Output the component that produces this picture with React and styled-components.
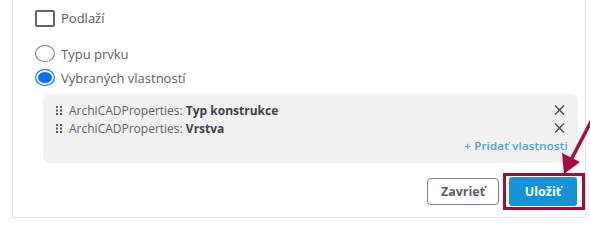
import React from "react";
import styled, { createGlobalStyle } from "styled-components";

const Global = createGlobalStyle`
  html, body { margin: 0; padding: 0; background: #fff; }
  body { font-family: "Open Sans", "Noto Sans", sans-serif; color: #555a62; }
  * { box-sizing: border-box; }
`;

const Page = styled.div`
  position: relative;
  width: 590px;
  height: 245px;
  overflow: hidden;
`;

const Panel = styled.div`
  margin-left: 12px;
  width: 574px;
  border: 1px solid #dfe2ea;
  border-top: none;
  padding: 10px 0 7px 22px;
  display: flex;
  flex-direction: column;
`;

const CheckRow = styled.label`
  display: flex;
  align-items: center;
  gap: 6px;
  height: 16px;
  font-size: 13px;
  color: #5d6068;
`;

const Box = styled.span`
  flex: none;
  width: 20px;
  height: 17px;
  border: 2px solid #5f6473;
  border-radius: 2px;
  background: #fff;
`;

const RadioGroup = styled.div`
  display: flex;
  flex-direction: column;
  gap: 7px;
  margin-top: 19px;
`;

const RadioRow = styled.label`
  display: flex;
  align-items: center;
  gap: 6px;
  height: 17px;
  font-size: 13px;
  color: #5d6068;
`;

const RadioDot = styled.span`
  flex: none;
  width: 20px;
  height: 17px;
  border-radius: 50%;
  border: 1.5px solid ${(p) => (p.$on ? "#1a7cf5" : "#7a7d85")};
  background: ${(p) => (p.$on ? "#0a6ff5" : "#fff")};
  box-shadow: ${(p) => (p.$on ? "inset 0 0 0 2px #fff" : "none")};
`;

const PropsBox = styled.div`
  margin: 8px 7px 0 8px;
  background: #f1f1f1;
  border-radius: 6px;
  padding: 7px 10px 8px 13px;
  display: flex;
  flex-direction: column;
`;

const PropRow = styled.div`
  display: flex;
  align-items: center;
  height: 18px;
  font-size: 12px;
  color: #61646b;
`;

const Handle = styled.svg`
  width: 7px;
  height: 9px;
  margin-right: 6px;
  flex: none;
`;

const PropName = styled.span`
  flex: 1;
  white-space: nowrap;
  b { color: #3f424a; font-weight: 700; }
`;

const RemoveBtn = styled.svg`
  width: 11px;
  height: 10px;
  margin-right: 3px;
`;

const AddLink = styled.a`
  align-self: flex-end;
  height: 18px;
  line-height: 18px;
  font-size: 11.5px;
  font-weight: 600;
  color: #4aa6da;
  letter-spacing: 0.2px;
  text-decoration: none;
`;

const Footer = styled.div`
  display: flex;
  justify-content: flex-end;
  align-items: center;
  gap: 4px;
  margin-top: 10px;
`;

const GhostButton = styled.button`
  width: 72px;
  height: 27px;
  border: 1.5px solid #7c7f86;
  border-radius: 4px;
  background: #fff;
  font-family: inherit;
  font-size: 12.5px;
  font-weight: 700;
  color: #5b5e66;
`;

const Highlight = styled.div`
  border: 3px solid #a50a3c;
  padding: 1px 5px 1px 3px;
  display: flex;
`;

const PrimaryButton = styled.button`
  width: 68px;
  height: 29px;
  border: none;
  border-radius: 3px;
  background: #1493d9;
  font-family: inherit;
  font-size: 12.5px;
  font-weight: 700;
  color: #fff;
`;

const Arrow = styled.svg`
  position: absolute;
  left: 550px;
  top: 100px;
  width: 40px;
  height: 80px;
  pointer-events: none;
`;

const DragIcon = () => (
  <Handle viewBox="0 0 7 9">
    {[0, 3.5, 7].map((y) =>
      [1, 5].map((x) => <rect key={`${x}-${y}`} x={x - 1} y={y} width="2" height="2" fill="#55585f" />)
    )}
  </Handle>
);

const XIcon = () => (
  <RemoveBtn viewBox="0 0 11 10">
    <path d="M1 0.5 L10 9.5 M10 0.5 L1 9.5" stroke="#4d5057" strokeWidth="1.5" />
  </RemoveBtn>
);

const props = ["Typ konstrukce", "Vrstva"];

export default function App() {
  return (
    <Page>
      <Global />
      <Panel>
        <CheckRow>
          <Box />
          Podlaží
        </CheckRow>
        <RadioGroup>
          <RadioRow>
            <RadioDot />
            Typu prvku
          </RadioRow>
          <RadioRow>
            <RadioDot $on />
            Vybraných vlastností
          </RadioRow>
        </RadioGroup>
        <PropsBox>
          {props.map((p) => (
            <PropRow key={p}>
              <DragIcon />
              <PropName>
                ArchiCADProperties: <b>{p}</b>
              </PropName>
              <XIcon />
            </PropRow>
          ))}
          <AddLink>+ Pridať vlastnosti</AddLink>
        </PropsBox>
        <Footer>
          <GhostButton>Zavrieť</GhostButton>
          <Highlight>
            <PrimaryButton>Uložiť</PrimaryButton>
          </Highlight>
        </Footer>
      </Panel>
      <Arrow viewBox="550 100 40 80">
        <path d="M596 112 L571 160" stroke="#a50a3c" strokeWidth="3.5" />
        <polygon points="564,174 562,153 580,162" fill="#a50a3c" />
      </Arrow>
    </Page>
  );
}
